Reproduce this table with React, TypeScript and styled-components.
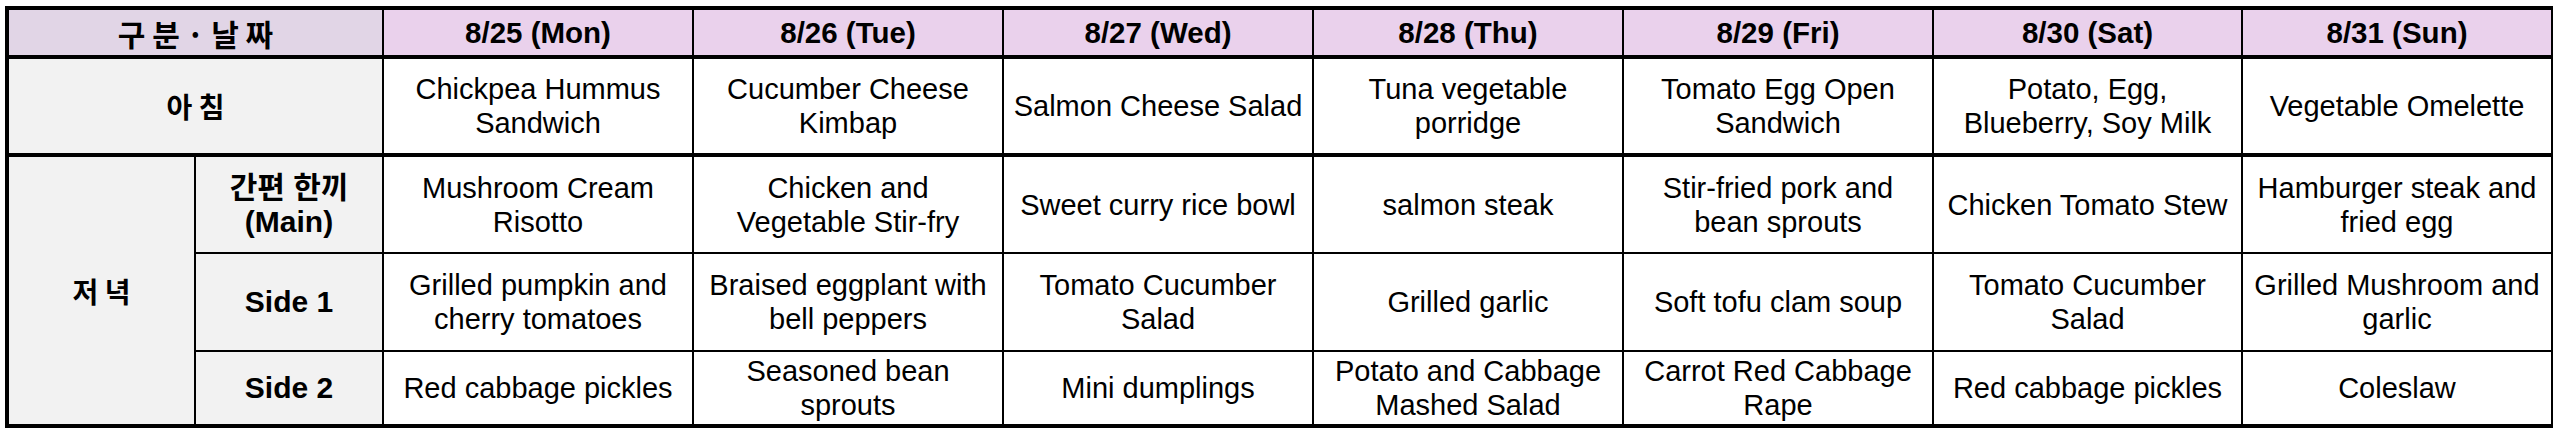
import styled, { createGlobalStyle } from "styled-components";

const GlobalStyle = createGlobalStyle`
  html, body {
    margin: 0;
    padding: 0;
    background: #ffffff;
  }
  body {
    font-family: "Liberation Sans", Arial, "Noto Sans CJK KR", sans-serif;
    color: #000;
  }
`;

type Day = {
  date: string;
  breakfast: string[];
  main: string[];
  side1: string[];
  side2: string[];
};

const DAYS: Day[] = [
  {
    date: "8/25 (Mon)",
    breakfast: ["Chickpea Hummus", "Sandwich"],
    main: ["Mushroom Cream", "Risotto"],
    side1: ["Grilled pumpkin and", "cherry tomatoes"],
    side2: ["Red cabbage pickles"],
  },
  {
    date: "8/26 (Tue)",
    breakfast: ["Cucumber Cheese", "Kimbap"],
    main: ["Chicken and", "Vegetable Stir-fry"],
    side1: ["Braised eggplant with", "bell peppers"],
    side2: ["Seasoned bean", "sprouts"],
  },
  {
    date: "8/27 (Wed)",
    breakfast: ["Salmon Cheese Salad"],
    main: ["Sweet curry rice bowl"],
    side1: ["Tomato Cucumber", "Salad"],
    side2: ["Mini dumplings"],
  },
  {
    date: "8/28 (Thu)",
    breakfast: ["Tuna vegetable", "porridge"],
    main: ["salmon steak"],
    side1: ["Grilled garlic"],
    side2: ["Potato and Cabbage", "Mashed Salad"],
  },
  {
    date: "8/29 (Fri)",
    breakfast: ["Tomato Egg Open", "Sandwich"],
    main: ["Stir-fried pork and", "bean sprouts"],
    side1: ["Soft tofu clam soup"],
    side2: ["Carrot Red Cabbage", "Rape"],
  },
  {
    date: "8/30 (Sat)",
    breakfast: ["Potato, Egg,", "Blueberry, Soy Milk"],
    main: ["Chicken Tomato Stew"],
    side1: ["Tomato Cucumber", "Salad"],
    side2: ["Red cabbage pickles"],
  },
  {
    date: "8/31 (Sun)",
    breakfast: ["Vegetable Omelette"],
    main: ["Hamburger steak and", "fried egg"],
    side1: ["Grilled Mushroom and", "garlic"],
    side2: ["Coleslaw"],
  },
];

const COL_WIDTHS = [188, 188, 310, 310, 310, 310, 310, 309, 311];

function Lines(props: { lines: string[] }) {
  return (
    <>
      {props.lines.map((line, i) => (
        <Line key={i}>{line}</Line>
      ))}
    </>
  );
}

export default function App() {
  return (
    <>
      <GlobalStyle />
      <Page>
        <Sheet>
          <colgroup>
            {COL_WIDTHS.map((w, i) => (
              <col key={i} style={{ width: w }} />
            ))}
          </colgroup>
          <tbody>
            <HeaderRow>
              <CornerCell colSpan={2}>구 분 · 날 짜</CornerCell>
              {DAYS.map((day) => (
                <DateCell key={day.date}>{day.date}</DateCell>
              ))}
            </HeaderRow>

            <BreakfastRow>
              <LabelCell colSpan={2}>아 침</LabelCell>
              {DAYS.map((day) => (
                <MenuCell key={day.date}>
                  <Lines lines={day.breakfast} />
                </MenuCell>
              ))}
            </BreakfastRow>

            <MainRow>
              <LabelCell rowSpan={3} $thickTop>
                저 녁
              </LabelCell>
              <SubLabelCell $thickTop>
                <Line>간편 한끼</Line>
                <Line>(Main)</Line>
              </SubLabelCell>
              {DAYS.map((day) => (
                <MenuCell key={day.date} $thickTop>
                  <Lines lines={day.main} />
                </MenuCell>
              ))}
            </MainRow>

            <SideRow>
              <SubLabelCell>Side 1</SubLabelCell>
              {DAYS.map((day) => (
                <MenuCell key={day.date}>
                  <Lines lines={day.side1} />
                </MenuCell>
              ))}
            </SideRow>

            <LastRow>
              <SubLabelCell>Side 2</SubLabelCell>
              {DAYS.map((day) => (
                <MenuCell key={day.date}>
                  <Lines lines={day.side2} />
                </MenuCell>
              ))}
            </LastRow>
          </tbody>
        </Sheet>
      </Page>
    </>
  );
}

const Page = styled.div`
  padding: 6px 0 0 5px;
`;

const Sheet = styled.table`
  width: 2546px;
  table-layout: fixed;
  border-collapse: collapse;
  border: 4px solid #000;
`;

const HeaderRow = styled.tr`
  height: 49px;
`;

const BreakfastRow = styled.tr`
  height: 98px;
`;

const MainRow = styled.tr`
  height: 98px;
`;

const SideRow = styled.tr`
  height: 98px;
`;

const LastRow = styled.tr`
  height: 75px;
`;

const Cell = styled.td<{ $thickTop?: boolean }>`
  border: 2px solid #000;
  border-top-width: ${(p) => (p.$thickTop ? "4px" : "2px")};
  padding: 0 3px;
  text-align: center;
  vertical-align: middle;
  overflow: hidden;
`;

const CornerCell = styled(Cell)`
  background: #e1d5e6;
  font-weight: bold;
  font-size: 30px;
  font-family: "Noto Sans CJK KR", "Liberation Sans", sans-serif;
  border-bottom-width: 4px;
`;

const DateCell = styled(Cell)`
  background: #ead1ec;
  font-weight: bold;
  font-size: 29.5px;
  border-bottom-width: 4px;
`;

const LabelCell = styled(Cell)`
  background: #f2f2f2;
  font-weight: bold;
  font-size: 28px;
  font-family: "Noto Sans CJK KR", "Liberation Sans", sans-serif;
`;

const SubLabelCell = styled(Cell)`
  background: #f2f2f2;
  font-weight: bold;
  font-size: 30px;
  line-height: 34px;
  font-family: "Liberation Sans", "Noto Sans CJK KR", sans-serif;
`;

const MenuCell = styled(Cell)`
  background: #fff;
  font-size: 29px;
  line-height: 34px;
`;

const Line = styled.div`
  white-space: nowrap;
`;
